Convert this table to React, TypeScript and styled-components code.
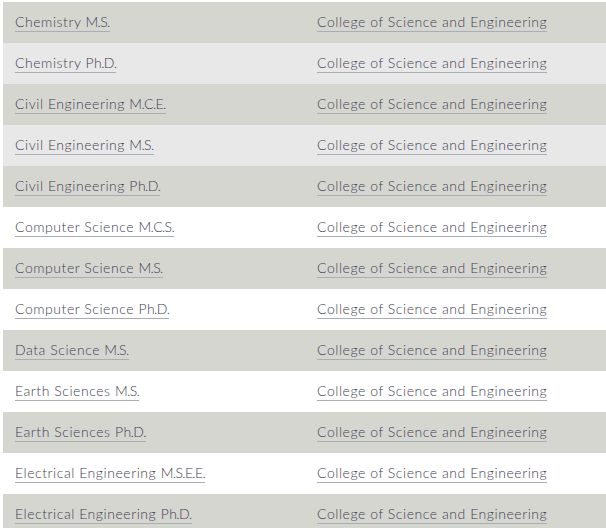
import React from "react";
import styled, { createGlobalStyle } from "styled-components";

const Global = createGlobalStyle`
  html, body { margin: 0; padding: 0; background: #ffffff; }
  body { font-family: Lato, "Open Sans", sans-serif; }
`;

const Table = styled.div`
  margin: 2px 0 0 3px;
  width: 603px;
  display: flex;
  flex-direction: column;
`;

const Row = styled.div<{ $bg: string }>`
  display: grid;
  grid-template-columns: 302px 1fr;
  height: 41px;
  align-items: center;
  background: ${(p) => p.$bg};
`;

const Cell = styled.div`
  padding-left: 12px;
  display: flex;
  align-items: center;
`;

const Link = styled.a`
  font-family: Lato, "Open Sans", sans-serif;
  font-size: 14px;
  font-weight: 300;
  letter-spacing: 0.55px;
  color: #3f3f52;
  text-decoration: none;
  white-space: nowrap;
  border-bottom: 1px solid #a9aeb6;
  line-height: 16px;
  padding-bottom: 1px;
  margin-top: 1px;
`;

const Dot = styled.span`
  margin: 0 -1.2px;
`;

const rows: [string, string][] = [
  ["Chemistry M.S.", "#d6d6d1"],
  ["Chemistry Ph.D.", "#e8e8e8"],
  ["Civil Engineering M.C.E.", "#d6d6d1"],
  ["Civil Engineering M.S.", "#e8e8e8"],
  ["Civil Engineering Ph.D.", "#d6d6d1"],
  ["Computer Science M.C.S.", "#ffffff"],
  ["Computer Science M.S.", "#d6d6d1"],
  ["Computer Science Ph.D.", "#ffffff"],
  ["Data Science M.S.", "#d6d6d1"],
  ["Earth Sciences M.S.", "#ffffff"],
  ["Earth Sciences Ph.D.", "#d6d6d1"],
  ["Electrical Engineering M.S.E.E.", "#ffffff"],
  ["Electrical Engineering Ph.D.", "#d6d6d1"],
];

function withDots(text: string) {
  const parts = text.split(".");
  return parts.map((p, i) => (
    <React.Fragment key={i}>
      {p}
      {i < parts.length - 1 && <Dot>.</Dot>}
    </React.Fragment>
  ));
}

export default function App() {
  return (
    <>
      <Global />
      <Table>
        {rows.map(([name, bg]) => (
          <Row key={name} $bg={bg}>
            <Cell>
              <Link href="#">{withDots(name)}</Link>
            </Cell>
            <Cell>
              <Link href="#">College of Science and Engineering</Link>
            </Cell>
          </Row>
        ))}
      </Table>
    </>
  );
}
